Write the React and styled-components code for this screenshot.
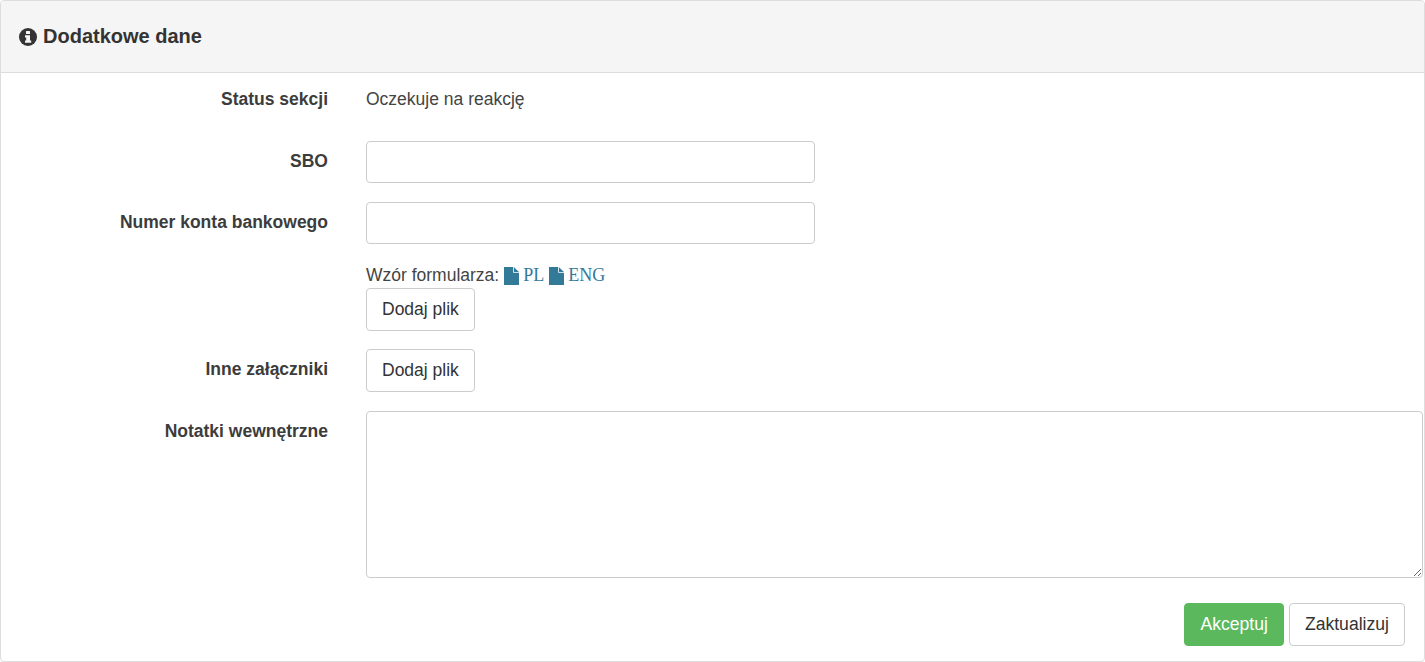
import React from "react";
import styled, { createGlobalStyle } from "styled-components";

const GlobalStyle = createGlobalStyle`
  html, body {
    margin: 0;
    padding: 0;
    background: #fff;
    font-family: "Liberation Sans", Arial, sans-serif;
    font-size: 17.5px;
    line-height: 25px;
    color: #333;
  }
  * {
    box-sizing: border-box;
  }
`;

const InfoIcon = () => (
  <svg width="18" height="18" viewBox="0 0 18 18" aria-hidden="true">
    <circle cx="9" cy="9" r="9" fill="#333" />
    <rect x="7" y="3" width="4" height="3" rx="0.5" fill="#f5f5f5" />
    <path d="M6 7.2h5v5.4h1.2v2.2H6v-2.2h1.2V9.4H6z" fill="#f5f5f5" />
  </svg>
);

const FileIcon = () => (
  <svg width="15" height="18" viewBox="0 0 15 18" aria-hidden="true">
    <path d="M0 0h9.2v5.8H15V18H0z" fill="#337a99" />
    <path d="M10 0.2L15 5h-5z" fill="#337a99" />
  </svg>
);

export default function App() {
  return (
    <>
      <GlobalStyle />
      <Panel>
        <Heading>
          <InfoIcon />
          <span>Dodatkowe dane</span>
        </Heading>
        <Body>
          <StatusRow>
            <StatusLabel>Status sekcji</StatusLabel>
            <StaticText>Oczekuje na reakcję</StaticText>
          </StatusRow>
          <Row>
            <Label>SBO</Label>
            <Input type="text" />
          </Row>
          <Row>
            <Label>Numer konta bankowego</Label>
            <Input type="text" />
          </Row>
          <Row>
            <Label />
            <Field>
              <Hint>
                <span>Wzór formularza:</span>
                <FileLink href="#">
                  <FileIcon /> PL
                </FileLink>
                <FileLink href="#">
                  <FileIcon /> ENG
                </FileLink>
              </Hint>
              <Button type="button">Dodaj plik</Button>
            </Field>
          </Row>
          <Row>
            <Label>Inne załączniki</Label>
            <Button type="button">Dodaj plik</Button>
          </Row>
          <Row>
            <Label>Notatki wewnętrzne</Label>
            <TextArea />
          </Row>
          <Actions>
            <Button type="button" $primary>
              Akceptuj
            </Button>
            <Button type="button">Zaktualizuj</Button>
          </Actions>
        </Body>
      </Panel>
    </>
  );
}

const Panel = styled.div`
  height: 662px;
  border: 1px solid #ddd;
  border-radius: 4px;
  background: #fff;
  overflow: hidden;
`;

const Heading = styled.div`
  display: flex;
  align-items: center;
  gap: 6px;
  height: 72px;
  padding: 0 18px;
  background: #f5f5f5;
  border-bottom: 1px solid #ddd;
  font-size: 20px;
  font-weight: bold;
  color: #333;
`;

const Body = styled.div`
  display: flex;
  flex-direction: column;
  gap: 19px;
  padding: 14px 1px 0 0;
`;

const Row = styled.div`
  display: grid;
  grid-template-columns: 327px 1fr;
  column-gap: 38px;
  align-items: start;
`;

const StatusRow = styled(Row)`
  margin-bottom: 10px;
`;

const Label = styled.label`
  padding-top: 8px;
  text-align: right;
  font-weight: bold;
  color: #3c3c3c;
`;

const StatusLabel = styled(Label)`
  padding-top: 0;
`;

const StaticText = styled.div`
  color: #444;
`;

const Input = styled.input`
  display: block;
  width: 449px;
  height: 42px;
  padding: 6px 12px;
  border: 1px solid #ccc;
  border-radius: 4px;
  background: #fff;
  font: inherit;
`;

const Field = styled.div`
  display: flex;
  flex-direction: column;
  align-items: flex-start;
  margin-bottom: -1px;
`;

const Hint = styled.div`
  display: flex;
  align-items: center;
  gap: 5px;
  height: 25px;
  color: #444;
`;

const FileLink = styled.a`
  display: inline-flex;
  align-items: center;
  gap: 4px;
  font-family: "Liberation Serif", "Times New Roman", serif;
  font-size: 18px;
  color: #337a99;
  text-decoration: none;
`;

const Button = styled.button`
  height: 43px;
  padding: 0 15px;
  border: 1px solid ${(p) => (p.$primary ? "#5cb85c" : "#ccc")};
  border-radius: 4px;
  background: ${(p) => (p.$primary ? "#5cb85c" : "#fff")};
  color: ${(p) => (p.$primary ? "#fff" : "#333")};
  font: inherit;
  justify-self: start;
`;

const TextArea = styled.textarea`
  display: block;
  width: 100%;
  height: 167px;
  padding: 6px 12px;
  border: 1px solid #ccc;
  border-radius: 4px;
  background: #fff;
  font: inherit;
`;

const Actions = styled.div`
  display: flex;
  justify-content: flex-end;
  gap: 5px;
  margin-top: 6px;
  padding-right: 18px;

  button {
    font-size: 17.6px;
  }
`;
